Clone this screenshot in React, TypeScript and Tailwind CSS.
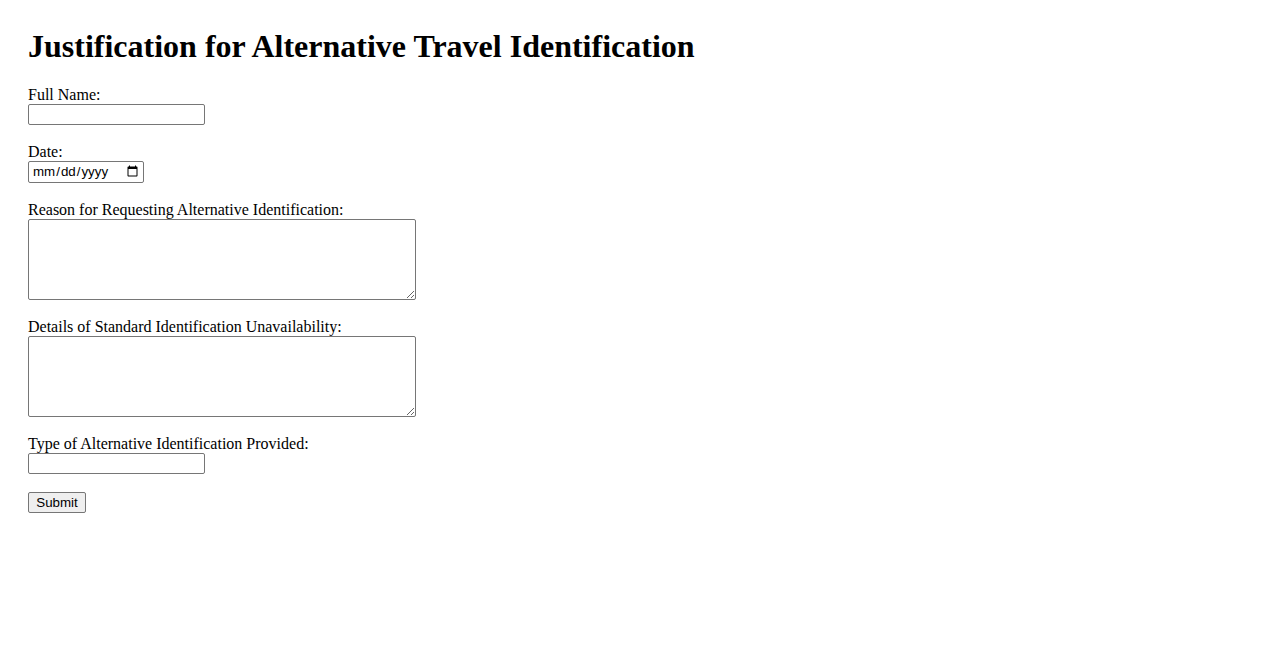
import React from 'react';

const fieldLabel = "block text-[16px] leading-[normal]";
const textInput =
  "block w-[177px] h-[21px] border border-[#767676] rounded-[2px] bg-white px-[2px] py-[1px] text-[13.33px] font-['Liberation_Sans',Arial,sans-serif] mb-[18px]";
const textArea =
  "block w-[388px] h-[81px] border border-[#767676] rounded-[2px] bg-white px-[2px] py-[2px] text-[13.33px] font-['Liberation_Mono',monospace] resize mb-[18px]";

const App: React.FC = () => {
  return (
    <div className="min-h-screen bg-white text-black pl-[28px] pt-[28px] font-['Liberation_Serif','Times_New_Roman',serif]">
      <h1 className="text-[32px] font-bold leading-[normal] mb-[21px]">
        Justification for Alternative Travel Identification
      </h1>
      <form className="flex flex-col items-start" onSubmit={(e) => e.preventDefault()}>
        <label htmlFor="fullName" className={fieldLabel}>Full Name:</label>
        <input id="fullName" type="text" className={textInput} />

        <label htmlFor="date" className={fieldLabel}>Date:</label>
        <input
          id="date"
          type="date"
          className="block w-[116px] h-[22px] border border-[#767676] rounded-[2px] bg-white pl-[3px] pr-[2px] text-[13.33px] font-['Liberation_Sans',Arial,sans-serif] mb-[18px]"
        />

        <label htmlFor="reason" className={fieldLabel}>Reason for Requesting Alternative Identification:</label>
        <textarea id="reason" className={textArea} />

        <label htmlFor="details" className={fieldLabel}>Details of Standard Identification Unavailability:</label>
        <textarea id="details" className={textArea} />

        <label htmlFor="altType" className={fieldLabel}>Type of Alternative Identification Provided:</label>
        <input id="altType" type="text" className={textInput} />

        <button
          type="submit"
          className="block w-[58px] h-[21px] border border-[#767676] rounded-[2px] bg-[#efefef] text-[13.33px] leading-none font-['Liberation_Sans',Arial,sans-serif]"
        >
          Submit
        </button>
      </form>
    </div>
  );
};

export default App;
